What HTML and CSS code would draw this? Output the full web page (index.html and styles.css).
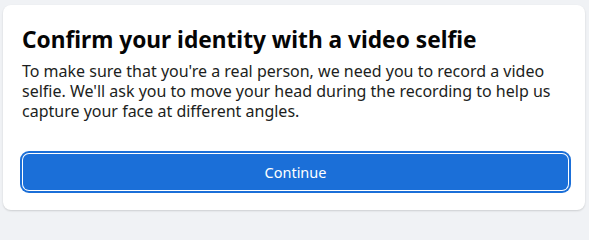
FILE: index.html
```html
<!DOCTYPE html>
<html lang="en">
<head>
<meta charset="utf-8">
<title>Confirm your identity</title>
<link rel="stylesheet" href="styles.css">
</head>
<body>
<div class="card">
  <h1 class="title">Confirm your identity with a video selfie</h1>
  <p class="desc">To make sure that you're a real person, we need you to record a video selfie. We'll ask you to move your head during the recording to help us capture your face at different angles.</p>
  <button class="btn" type="button">Continue</button>
</div>
</body>
</html>
```
FILE: styles.css
```css
html, body {
  margin: 0;
  padding: 0;
  background: #f0f2f5;
}
body {
  padding: 5px 4px 5px 3px;
  font-family: "Noto Sans", "Open Sans", sans-serif;
}
.card {
  background: #fff;
  border-radius: 8px;
  box-shadow: 0 1px 2px rgba(0,0,0,0.15);
  padding: 21px 17px 20px 19px;
  display: flex;
  flex-direction: column;
}
.title {
  margin: 0;
  font-size: 22.7px;
  line-height: 28px;
  font-weight: 700;
  color: #050505;
}
.desc {
  margin: 7px 0 0;
  font-size: 16px;
  line-height: 20px;
  color: #1c1e21;
}
.btn {
  margin: 33px 0 0 1px;
  height: 36px;
  border: none;
  border-radius: 6px;
  background: #1b6fd8;
  color: #fff;
  font-family: inherit;
  font-size: 14.5px;
  box-shadow: 0 0 0 1px #fff, 0 0 0 3px #1b6fd8;
}
```
